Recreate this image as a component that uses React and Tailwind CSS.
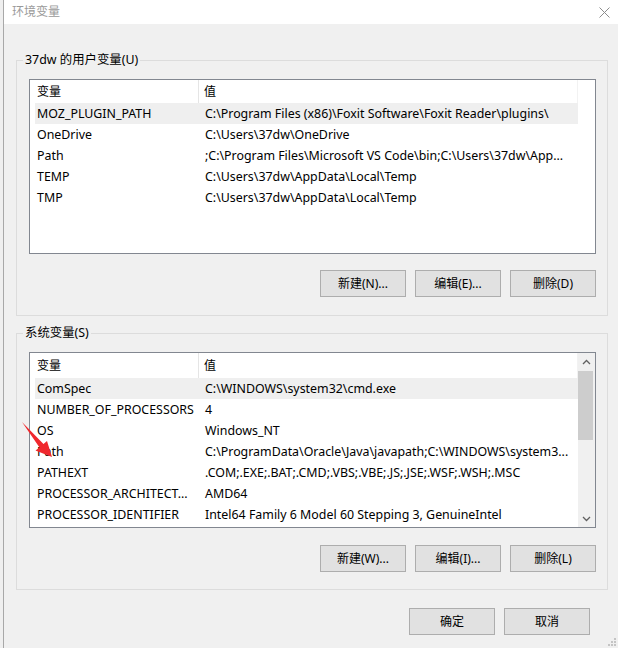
import React from "react";

const userRows = [
  ["MOZ_PLUGIN_PATH", "C:\\Program Files (x86)\\Foxit Software\\Foxit Reader\\plugins\\"],
  ["OneDrive", "C:\\Users\\37dw\\OneDrive"],
  ["Path", ";C:\\Program Files\\Microsoft VS Code\\bin;C:\\Users\\37dw\\App..."],
  ["TEMP", "C:\\Users\\37dw\\AppData\\Local\\Temp"],
  ["TMP", "C:\\Users\\37dw\\AppData\\Local\\Temp"],
];

const sysRows = [
  ["ComSpec", "C:\\WINDOWS\\system32\\cmd.exe"],
  ["NUMBER_OF_PROCESSORS", "4"],
  ["OS", "Windows_NT"],
  ["Path", "C:\\ProgramData\\Oracle\\Java\\javapath;C:\\WINDOWS\\system3..."],
  ["PATHEXT", ".COM;.EXE;.BAT;.CMD;.VBS;.VBE;.JS;.JSE;.WSF;.WSH;.MSC"],
  ["PROCESSOR_ARCHITECT...", "AMD64"],
  ["PROCESSOR_IDENTIFIER", "Intel64 Family 6 Model 60 Stepping 3, GenuineIntel"],
];

function Button({ children }) {
  return (
    <div className="w-[86px] h-[27px] bg-[#e1e1e1] border border-[#adadad] flex items-center justify-center leading-none text-[12px]">
      {children}
    </div>
  );
}

function Rows({ rows, headerH }) {
  return (
    <div className="flex-1 flex flex-col min-w-0">
      <div className={`flex ${headerH} bg-white`}>
        <div className="ml-[5px] w-[543px] flex">
          <div className="w-[164px] pl-[2px] flex items-center border-r border-[#e5e5e5] text-[12px]">变量</div>
          <div className="flex-1 pl-[5px] flex items-center border-r border-[#f2f2f2] text-[12px]">值</div>
        </div>
      </div>
      {rows.map(([k, v], i) => (
        <div key={i} className="flex h-[21px]">
          <div className={`ml-[5px] w-[543px] flex ${i === 0 ? "bg-[#efefef]" : ""}`}>
            <div className="w-[164px] pl-[2px] pt-[1px] flex items-center whitespace-nowrap overflow-hidden">{k}</div>
            <div className="flex-1 pl-[6px] pt-[1px] flex items-center whitespace-nowrap overflow-hidden">{v}</div>
          </div>
        </div>
      ))}
    </div>
  );
}

function Chevron({ up }) {
  return (
    <svg width="9" height="6" viewBox="0 0 9 6">
      <polyline
        points={up ? "1,5 4.5,1.5 8,5" : "1,1 4.5,4.5 8,1"}
        fill="none"
        stroke="#606060"
        strokeWidth="1.3"
      />
    </svg>
  );
}

function GroupBox({ label, children, className }) {
  return (
    <div className={`relative border border-[#dcdcdc] w-[592px] ${className}`}>
      <span className="absolute left-[6px] -top-[10px] h-[17px] leading-[17px] px-[2px] bg-[#f0f0f0]">{label}</span>
      {children}
    </div>
  );
}

export default function App() {
  return (
    <div className="relative w-[618px] h-[648px] overflow-hidden flex bg-[#f0f0f0] text-[12.4px] text-black font-['Noto_Sans','Noto_Sans_CJK_SC',sans-serif]">
      <div className="w-[4px] shrink-0 bg-[#efefef] border-r border-[#a8a8a8]" />
      <div className="flex-1 flex flex-col">
        <div className="h-[24px] bg-white flex items-center justify-between pl-[8px] pr-[8px]">
          <span className="text-[#9a9a9a] leading-none text-[12px]">环境变量</span>
          <svg width="11" height="11" viewBox="0 0 11 11">
            <path d="M0.5 0.5 L10.5 10.5 M10.5 0.5 L0.5 10.5" stroke="#8c8c8c" strokeWidth="1" />
          </svg>
        </div>
        <div className="flex flex-col pl-[12px]">
          <GroupBox label="37dw 的用户变量(U)" className="mt-[36px] pt-[18px] pl-[12px] pb-[18px]">
            <div className="w-[567px] h-[175px] border border-[#828790] bg-white flex">
              <Rows rows={userRows} headerH="h-[23px]" />
              <div className="w-[17px] bg-white" />
            </div>
            <div className="w-[567px] mt-[16px] flex justify-end gap-[9px]">
              <Button>新建(N)...</Button>
              <Button>编辑(E)...</Button>
              <Button>删除(D)</Button>
            </div>
          </GroupBox>
          <GroupBox label="系统变量(S)" className="mt-[17px] pt-[18px] pl-[12px] pb-[17px]">
            <div className="w-[567px] h-[176px] border border-[#828790] bg-white flex">
              <Rows rows={sysRows} headerH="h-[25px]" />
              <div className="w-[17px] bg-[#f0f0f0] flex flex-col">
                <div className="h-[18px] flex items-center justify-center">
                  <Chevron up />
                </div>
                <div className="h-[69px] w-[15px] ml-[0px] bg-[#cdcdcd]" />
                <div className="flex-1" />
                <div className="h-[17px] flex items-center justify-center">
                  <Chevron />
                </div>
              </div>
            </div>
            <div className="w-[567px] mt-[17px] flex justify-end gap-[9px]">
              <Button>新建(W)...</Button>
              <Button>编辑(I)...</Button>
              <Button>删除(L)</Button>
            </div>
          </GroupBox>
          <div className="mt-[18px] w-[592px] pr-[18px] flex justify-end gap-[9px]">
            <Button>确定</Button>
            <Button>取消</Button>
          </div>
        </div>
      </div>
      <svg className="absolute left-0 top-0 pointer-events-none" width="618" height="648" viewBox="0 0 618 648">
        <polygon points="22,422 43.5,444 47,441 52,457 35.5,450.5 39.5,447.5" fill="#f0282d" />
        <g fill="#c4c4c4">
          <rect x="614" y="638" width="2" height="2" />
          <rect x="611" y="641" width="2" height="2" />
          <rect x="614" y="641" width="2" height="2" />
          <rect x="608" y="644" width="2" height="2" />
          <rect x="611" y="644" width="2" height="2" />
          <rect x="614" y="644" width="2" height="2" />
        </g>
      </svg>
    </div>
  );
}
